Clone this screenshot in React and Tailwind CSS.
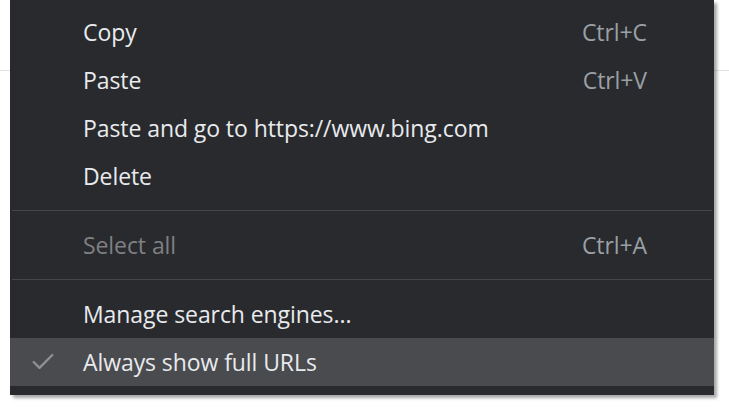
import { Check } from "lucide-react";

const groups = [
  [
    { label: "Copy", shortcut: "Ctrl+C" },
    { label: "Paste", shortcut: "Ctrl+V" },
    { label: "Paste and go to https://www.bing.com" },
    { label: "Delete" },
  ],
  [{ label: "Select all", shortcut: "Ctrl+A", disabled: true }],
  [
    { label: "Manage search engines..." },
    { label: "Always show full URLs", checked: true, active: true },
  ],
];

function MenuItem({ item }) {
  return (
    <div
      className={
        "flex h-12 items-center pr-[67px] " +
        (item.active ? "bg-[#4a4b4f]" : "")
      }
    >
      <div className="flex w-[73px] shrink-0 items-center pl-[19px]">
        {item.checked && (
          <Check className="h-[28px] w-[28px] text-[#8e9094]" strokeWidth={2} />
        )}
      </div>
      <span
        className={
          "flex-1 pt-[1px] " + (item.disabled ? "text-[#7e8084]" : "text-[#e8eaed]")
        }
      >
        {item.label}
      </span>
      {item.shortcut && (
        <span className="pt-[1px] text-[#9aa0a6]">{item.shortcut}</span>
      )}
    </div>
  );
}

export default function App() {
  return (
    <div className="relative h-[410px] w-[729px] overflow-hidden bg-white font-['Open_Sans',sans-serif]">
      <div className="h-[71px] border-b border-[#e3e3e3]" />

      {/* context menu */}
      <div className="absolute left-[10px] top-0 w-[704px] bg-[#292a2d] pb-[9px] pt-2 text-[23px] tracking-[-0.08px] shadow-[3px_3px_3px_rgba(0,0,0,0.35)]">
        {groups.map((group, gi) => (
          <div key={gi}>
            {gi > 0 && (
              <div className="py-[10px]">
                <div className="mx-[2px] h-px bg-[#45464a]" />
              </div>
            )}
            {group.map((item) => (
              <MenuItem key={item.label} item={item} />
            ))}
          </div>
        ))}
      </div>
    </div>
  );
}
